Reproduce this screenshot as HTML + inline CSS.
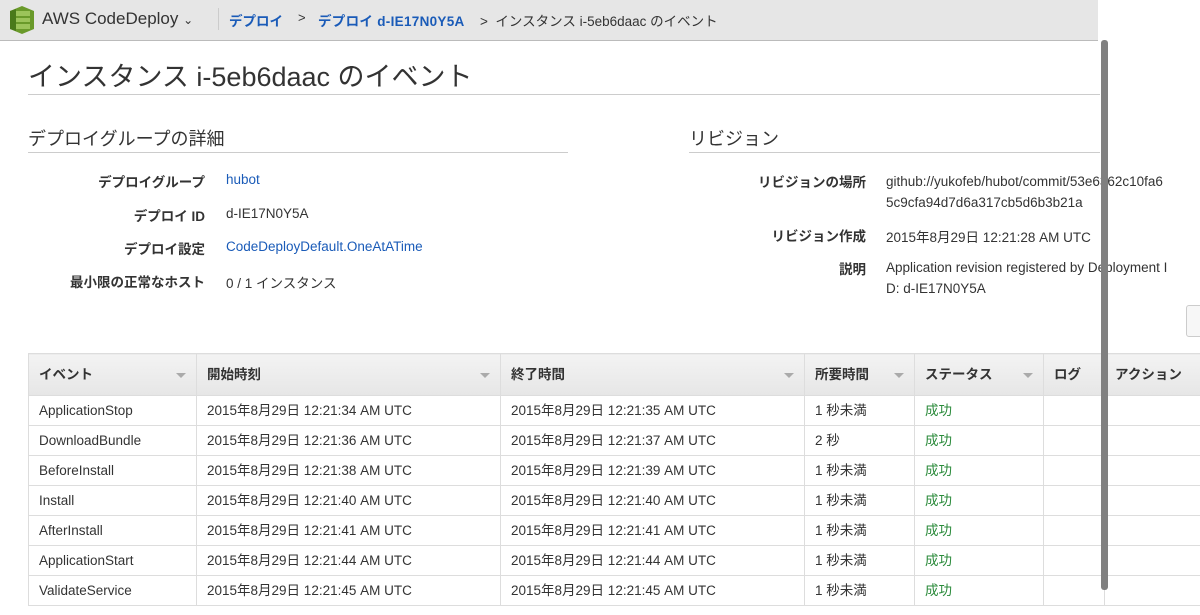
<!DOCTYPE html>
<html><head><meta charset="utf-8"><style>
*{margin:0;padding:0;box-sizing:border-box}
body{width:1200px;height:615px;overflow:hidden;background:#fff;font-family:"Liberation Sans","Noto Sans CJK JP",sans-serif;color:#333;position:relative;font-size:14px}
.a{position:absolute;white-space:nowrap}
.top{position:absolute;left:0;top:0;width:1098px;height:41px;background:#e6e6e6;border-bottom:1px solid #bbb}
.lnk{color:#1a5bb8}
.b{font-weight:bold}
.lbl{position:absolute;right:995px;font-weight:bold;font-size:13.5px;white-space:nowrap}
.lbl2{position:absolute;right:334px;font-weight:bold;font-size:13.5px;white-space:nowrap}
table{position:absolute;left:28px;top:353px;border-collapse:collapse;font-size:13.5px;table-layout:fixed;width:1276px}
td,th{height:30px;border:1px solid #ddd;padding:0 10px;text-align:left;white-space:nowrap;line-height:16px;vertical-align:middle;overflow:hidden}
th{height:42px;background:linear-gradient(#f3f3f3,#e6e6e6);font-weight:bold;position:relative}
th .c{position:absolute;right:10px;top:19px;width:0;height:0;border-left:5px solid transparent;border-right:5px solid transparent;border-top:5px solid #aaa}
.ok{color:#2a8a3a}
</style></head><body>
<div class="top"></div>
<svg class="a" style="left:10px;top:6px" width="24" height="28" viewBox="0 0 24 28"><polygon points="12,0 24,5 24,23 12,28 0,23 0,5" fill="#6a9a2a"/><polygon points="6,5 20,5 20,10 6,10" fill="#9cc45a"/><polygon points="6,12 20,12 20,16 6,16" fill="#9cc45a"/><polygon points="6,18 20,18 20,23 6,23" fill="#9cc45a"/><polygon points="0,5 6,3 6,25 0,23" fill="#4a7a1a"/></svg>
<div class="a" style="left:42px;top:9px;font-size:17px;color:#333">AWS CodeDeploy <span style="font-size:12px">⌄</span></div>
<div class="a" style="left:218px;top:8px;width:1px;height:22px;background:#ccc"></div>
<div class="a b lnk" style="left:229px;top:10px;font-size:13.5px">デプロイ</div>
<div class="a" style="left:298px;top:10px;font-size:13px">&gt;</div>
<div class="a b lnk" style="left:318px;top:10px;font-size:13.5px;letter-spacing:0.3px">デプロイ d-IE17N0Y5A</div>
<div class="a" style="left:480px;top:10px;font-size:13.5px">&gt; &nbsp;インスタンス i-5eb6daac のイベント</div>
<div class="a" style="left:28px;top:55px;font-size:27px;color:#333">インスタンス i-5eb6daac のイベント</div>
<div class="a" style="left:28px;top:94px;width:1072px;height:1px;background:#ccc"></div>
<div class="a" style="left:28px;top:125px;font-size:18px">デプロイグループの詳細</div>
<div class="a" style="left:28px;top:152px;width:540px;height:1px;background:#ccc"></div>
<div class="a" style="left:689px;top:125px;font-size:18px">リビジョン</div>
<div class="a" style="left:689px;top:152px;width:411px;height:1px;background:#ccc"></div>
<div class="lbl" style="top:171px">デプロイグループ</div><div class="a lnk" style="left:226px;top:172px;font-size:13.5px">hubot</div>
<div class="lbl" style="top:205px">デプロイ ID</div><div class="a" style="left:226px;top:206px;font-size:13.5px">d-IE17N0Y5A</div>
<div class="lbl" style="top:238px">デプロイ設定</div><div class="a lnk" style="left:226px;top:239px;font-size:13.5px">CodeDeployDefault.OneAtATime</div>
<div class="lbl" style="top:271px">最小限の正常なホスト</div><div class="a" style="left:226px;top:272px;font-size:13.5px">0 / 1 インスタンス</div>
<div class="lbl2" style="top:171px">リビジョンの場所</div><div class="a" style="left:886px;top:171px;font-size:13.5px;line-height:21px">github://yukofeb/hubot/commit/53e6362c10fa6<br>5c9cfa94d7d6a317cb5d6b3b21a</div>
<div class="lbl2" style="top:225px">リビジョン作成</div><div class="a" style="left:886px;top:226px;font-size:13.5px">2015年8月29日 12:21:28 AM UTC</div>
<div class="lbl2" style="top:258px">説明</div><div class="a" style="left:886px;top:257px;font-size:13.5px;line-height:21px">Application revision registered by Deployment I<br>D: d-IE17N0Y5A</div>
<div class="a" style="left:1186px;top:305px;width:30px;height:32px;border:1px solid #ccc;border-radius:3px;background:#f7f7f7"></div>
<table>
<colgroup><col style="width:168px"><col style="width:304px"><col style="width:304px"><col style="width:110px"><col style="width:129px"><col style="width:61px"><col style="width:200px"></colgroup>
<tr><th>イベント<span class="c"></span></th><th>開始時刻<span class="c"></span></th><th>終了時間<span class="c"></span></th><th>所要時間<span class="c"></span></th><th>ステータス<span class="c"></span></th><th>ログ</th><th>アクション</th></tr>
<tr><td>ApplicationStop</td><td>2015年8月29日 12:21:34 AM UTC</td><td>2015年8月29日 12:21:35 AM UTC</td><td>1 秒未満</td><td class="ok">成功</td><td></td><td></td></tr>
<tr><td>DownloadBundle</td><td>2015年8月29日 12:21:36 AM UTC</td><td>2015年8月29日 12:21:37 AM UTC</td><td>2 秒</td><td class="ok">成功</td><td></td><td></td></tr>
<tr><td>BeforeInstall</td><td>2015年8月29日 12:21:38 AM UTC</td><td>2015年8月29日 12:21:39 AM UTC</td><td>1 秒未満</td><td class="ok">成功</td><td></td><td></td></tr>
<tr><td>Install</td><td>2015年8月29日 12:21:40 AM UTC</td><td>2015年8月29日 12:21:40 AM UTC</td><td>1 秒未満</td><td class="ok">成功</td><td></td><td></td></tr>
<tr><td>AfterInstall</td><td>2015年8月29日 12:21:41 AM UTC</td><td>2015年8月29日 12:21:41 AM UTC</td><td>1 秒未満</td><td class="ok">成功</td><td></td><td></td></tr>
<tr><td>ApplicationStart</td><td>2015年8月29日 12:21:44 AM UTC</td><td>2015年8月29日 12:21:44 AM UTC</td><td>1 秒未満</td><td class="ok">成功</td><td></td><td></td></tr>
<tr><td>ValidateService</td><td>2015年8月29日 12:21:45 AM UTC</td><td>2015年8月29日 12:21:45 AM UTC</td><td>1 秒未満</td><td class="ok">成功</td><td></td><td></td></tr>
</table>
<div class="a" style="left:1101px;top:40px;width:7px;height:550px;background:#808080;border-radius:3px"></div>
</body></html>
